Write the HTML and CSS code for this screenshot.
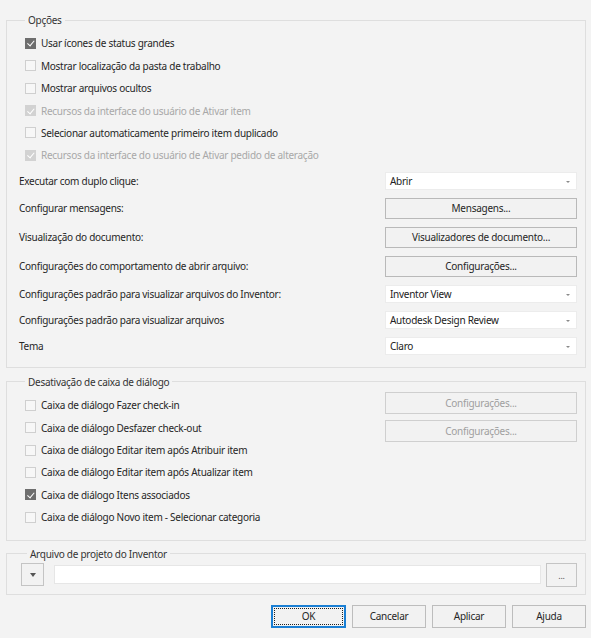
FILE: index.html
```html
<!DOCTYPE html>
<html lang="pt">
<head>
<meta charset="utf-8">
<link rel="stylesheet" href="styles.css">
</head>
<body>
<div class="dialog">
  <fieldset class="group options">
    <legend>Opções</legend>
    <div class="checks">
      <div class="chk"><span class="box on"></span>Usar ícones de status grandes</div>
      <div class="chk"><span class="box"></span>Mostrar localização da pasta de trabalho</div>
      <div class="chk"><span class="box"></span>Mostrar arquivos ocultos</div>
      <div class="chk disabled"><span class="box on"></span>Recursos da interface do usuário de Ativar item</div>
      <div class="chk"><span class="box"></span>Selecionar automaticamente primeiro item duplicado</div>
      <div class="chk disabled"><span class="box on"></span>Recursos da interface do usuário de Ativar pedido de alteração</div>
    </div>
    <div class="settings">
      <div class="lbl">Executar com duplo clique:</div>
      <div class="select">Abrir<span class="arrow"></span></div>
      <div class="lbl">Configurar mensagens:</div>
      <div class="btn">Mensagens...</div>
      <div class="lbl">Visualização do documento:</div>
      <div class="btn">Visualizadores de documento...</div>
      <div class="lbl">Configurações do comportamento de abrir arquivo:</div>
      <div class="btn">Configurações...</div>
      <div class="lbl">Configurações padrão para visualizar arquivos do Inventor:</div>
      <div class="select">Inventor View<span class="arrow"></span></div>
      <div class="lbl">Configurações padrão para visualizar arquivos</div>
      <div class="select">Autodesk Design Review<span class="arrow"></span></div>
      <div class="lbl">Tema</div>
      <div class="select">Claro<span class="arrow"></span></div>
    </div>
  </fieldset>

  <fieldset class="group dialogs">
    <legend>Desativação de caixa de diálogo</legend>
    <div class="dlg-grid">
      <div class="checks">
        <div class="chk"><span class="box"></span>Caixa de diálogo Fazer check-in</div>
        <div class="chk"><span class="box"></span>Caixa de diálogo Desfazer check-out</div>
        <div class="chk"><span class="box"></span>Caixa de diálogo Editar item após Atribuir item</div>
        <div class="chk"><span class="box"></span>Caixa de diálogo Editar item após Atualizar item</div>
        <div class="chk"><span class="box on"></span>Caixa de diálogo Itens associados</div>
        <div class="chk"><span class="box"></span>Caixa de diálogo Novo item - Selecionar categoria</div>
      </div>
      <div class="side-btns">
        <div class="btn off">Configurações...</div>
        <div class="btn off">Configurações...</div>
      </div>
    </div>
  </fieldset>

  <fieldset class="group project">
    <legend>Arquivo de projeto do Inventor</legend>
    <div class="proj-row">
      <div class="btn drop"><span class="arrow dark"></span></div>
      <div class="input"></div>
      <div class="btn dots">...</div>
    </div>
  </fieldset>

  <div class="footer">
    <div class="btn foot ok">OK</div>
    <div class="btn foot">Cancelar</div>
    <div class="btn foot">Aplicar</div>
    <div class="btn foot">Ajuda</div>
  </div>
</div>
</body>
</html>
```

FILE: styles.css
```css
* { box-sizing: border-box; }

html, body {
  margin: 0;
  padding: 0;
  background: #f3f3f3;
}

body {
  font-family: "Noto Sans", "Open Sans", sans-serif;
  font-size: 10px;
  letter-spacing: -0.27px;
  color: #262626;
  width: 591px;
  height: 638px;
  overflow: hidden;
}

.dialog {
  padding: 13px 5px 0 6px;
}

.group {
  margin: 0;
  border: 1px solid #dedede;
  padding: 0;
  min-width: 0;
}

.group legend {
  margin-left: 6px;
  padding: 0 3px;
  line-height: 14px;
  height: 14px;
  color: #333;
}

.options {
  padding: 5px 8px 12px 12px;
}

.checks {
  display: flex;
  flex-direction: column;
}

.chk {
  height: 22.45px;
  display: flex;
  align-items: center;
  padding-left: 6px;
  white-space: nowrap;
}

.chk.disabled {
  color: #a8a8a8;
}

.box {
  width: 11px;
  height: 11px;
  border: 1px solid #cfcfcf;
  background: #f7f7f7;
  margin-right: 5px;
  flex: none;
  position: relative;
}

.box.on {
  background: #6e6e6e;
  border-color: #6e6e6e;
}

.box.on::after {
  content: "";
  position: absolute;
  left: 2.5px;
  top: 0.5px;
  width: 3px;
  height: 5.5px;
  border-right: 1.5px solid #fff;
  border-bottom: 1.5px solid #fff;
  transform: rotate(40deg);
}

.chk.disabled .box.on {
  background: #d2d2d2;
  border-color: #d2d2d2;
}

.settings {
  margin-top: 5.3px;
  display: grid;
  grid-template-columns: 1fr 192px;
  row-gap: 8px;
  align-items: center;
}

.lbl {
  white-space: nowrap;
}

.select {
  height: 18px;
  background: #fff;
  border: 1px solid #ececec;
  padding: 0 0 0 4px;
  display: flex;
  align-items: center;
  position: relative;
  color: #222;
}

.arrow {
  position: absolute;
  right: 6px;
  top: 8px;
  width: 0;
  height: 0;
  border-left: 2.5px solid transparent;
  border-right: 2.5px solid transparent;
  border-top: 2.5px solid #8a8a8a;
}

.arrow.dark {
  position: static;
  border-left-width: 3.5px;
  border-right-width: 3.5px;
  border-top: 4px solid #555;
}

.btn {
  height: 21px;
  border: 1px solid #b9b9b9;
  background: #f2f2f2;
  display: flex;
  align-items: center;
  justify-content: center;
  color: #262626;
  white-space: nowrap;
}

.btn.off {
  height: 22px;
  color: #9f9f9f;
  border-color: #cfcfcf;
}

.dialogs {
  margin-top: 7px;
  padding: 5px 8px 11px 12px;
}

.dlg-grid {
  display: grid;
  grid-template-columns: 1fr 192px;
  align-items: start;
}

.side-btns {
  margin-top: -2px;
  display: flex;
  flex-direction: column;
  gap: 6px;
}

.project {
  margin-top: 6px;
  padding: 2px 8px 7px 14px;
}

.proj-row {
  display: flex;
  align-items: center;
}

.btn.drop {
  width: 23px;
  height: 23px;
  border-color: #c4c4c4;
}

.input {
  flex: 1;
  height: 19px;
  margin: 0 5px 0 10px;
  background: #fff;
  border: 1px solid #e6e6e6;
}

.btn.dots {
  width: 31px;
  height: 24px;
  border-color: #c4c4c4;
  color: #555;
  font-size: 9px;
  align-items: flex-end;
  padding-bottom: 4px;
}

.footer {
  margin-top: 10px;
  display: flex;
  justify-content: flex-end;
  gap: 6px;
}

.btn.foot {
  width: 74px;
  height: 23px;
  border-color: #bdbdbd;
}

.btn.ok {
  width: 75px;
  border: 1px solid #1a7fd4;
  box-shadow: inset 0 0 0 1px #1a7fd4;
  position: relative;
}

.btn.ok::after {
  content: "";
  position: absolute;
  inset: 2px;
  border: 1px dotted #222;
}
```
